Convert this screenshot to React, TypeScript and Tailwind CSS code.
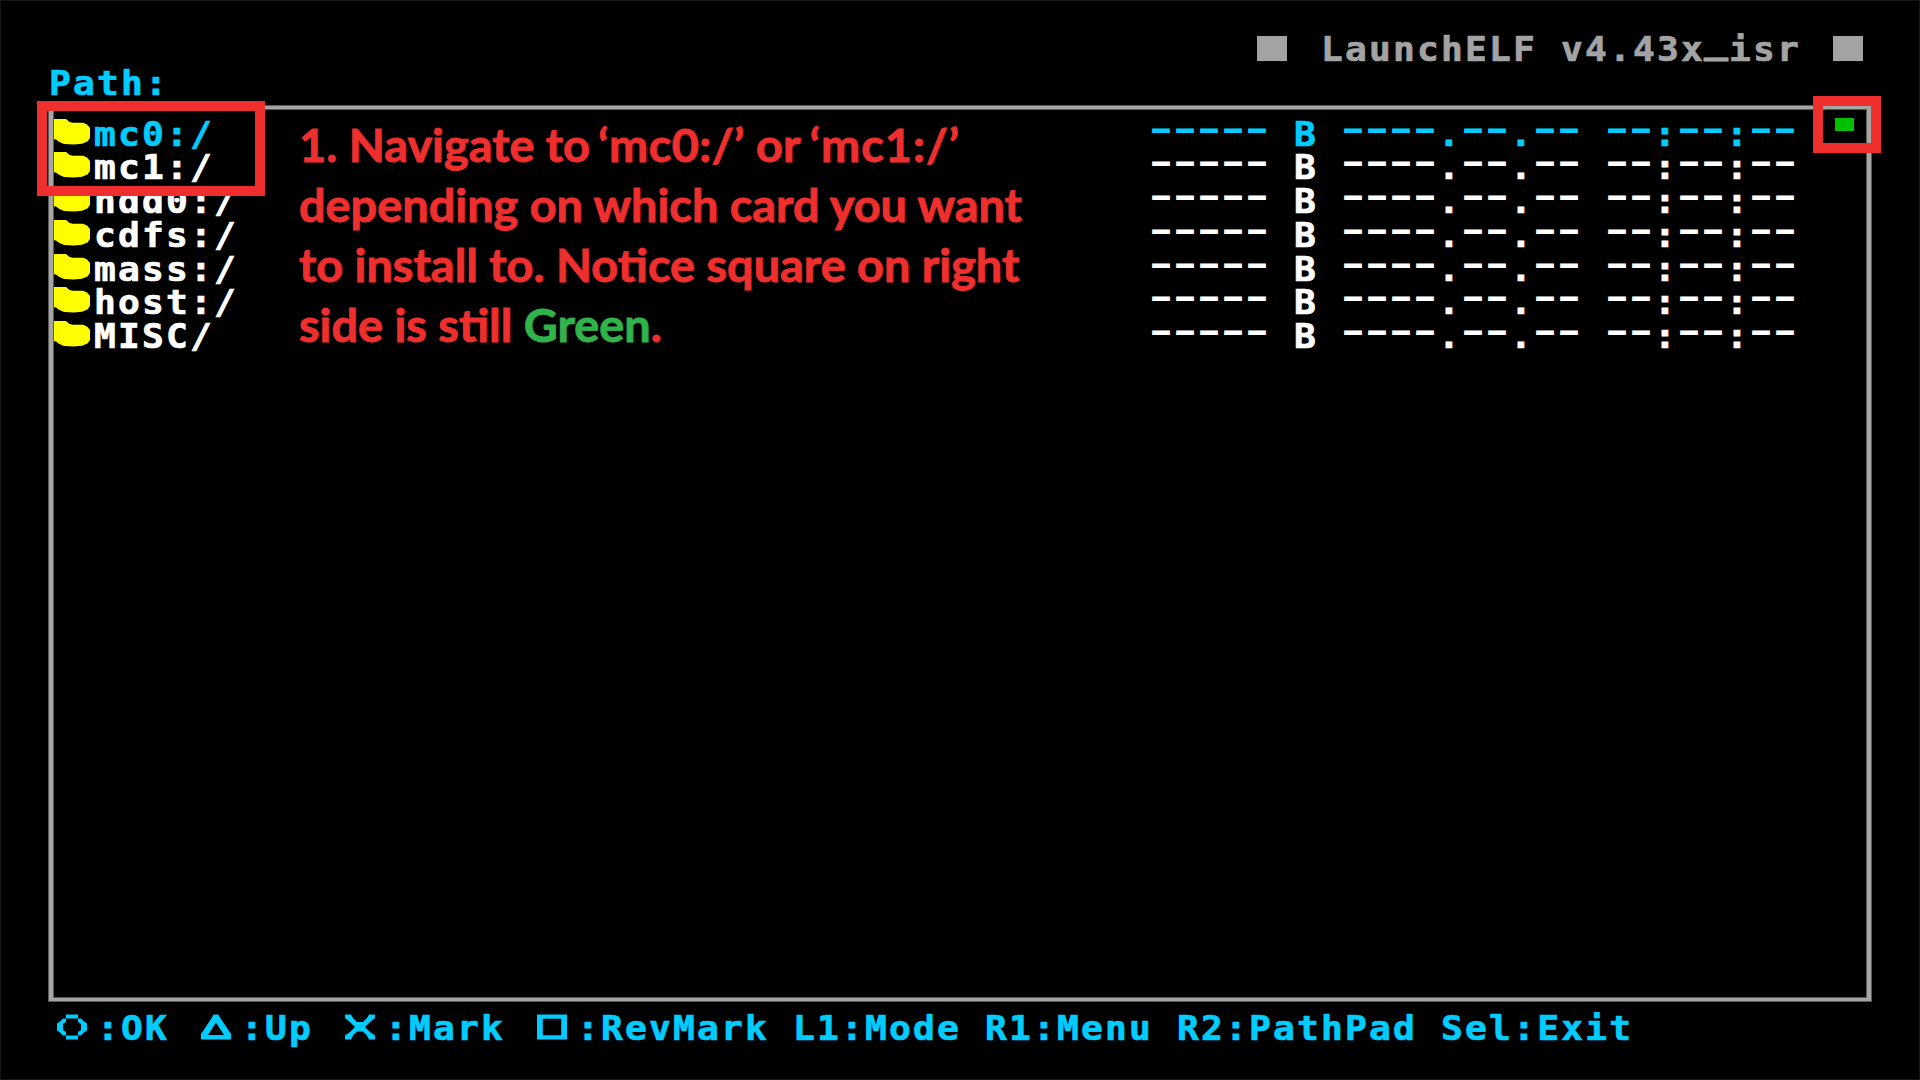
const CELL = 24;

const rows = ['mc0:/', 'mc1:/', 'hdd0:/', 'cdfs:/', 'mass:/', 'host:/', 'MISC/'];
const details = '----- B ----.--.-- --:--:--';

const pad = {
  circle:
    'M9 0.4H21V4.5H9ZM9 21.5H21V25.6H9ZM9 4.5V8L6 10V16L9 18V21.5H6L3 18.5L0 16.5V9.5L3 7.5L6 4.5ZM21 4.5V8L24 10V16L21 18V21.5H24L27 18.5L30 16.5V9.5L27 7.5L24 4.5Z',
  triangle: 'M12.7 0.4H17.3L20 5L30 20V25.6H0V20L10 5ZM15 8.5L7 21H23Z',
  cross:
    'M0 0.4H6L8 4L12 8H18L22 4L24 0.4H30V4L25 8L20 13L25 18L30 21.5V25.6H24L22 21.5L18 17.5H12L8 21.5L6 25.6H0V21.5L5 18L10 13L5 8L0 4Z',
  square: 'M0 0.4H30V25.6H0ZM5.8 4.8V21.2H24.2V4.8Z',
};

/** Console text on a 24px character grid. */
function Mono({ children }: { children: string }) {
  const chunks = children.match(/-+|_+|[^-_]+/g) ?? [];
  return (
    <span className="inline-flex h-[33.75px] whitespace-pre font-['DejaVu_Sans_Mono',monospace] text-[34.5px] font-bold leading-[33.75px]">
      {chunks.map((chunk, i) => (
        <span key={i} className="block" style={{ width: chunk.length * CELL }}>
          <span
            className={
              chunk[0] === '-'
                ? "block w-max origin-left -translate-y-[3.6px] scale-x-[1.676] scale-y-[0.9] font-['DejaVu_Sans',sans-serif]"
                : chunk[0] === '_'
                  ? 'block w-max origin-left -translate-y-[7.5px] scale-x-[1.155] [-webkit-text-stroke:0.8px_currentColor]'
                  : 'block w-max origin-left translate-x-[1.1px] translate-y-[0.7px] scale-x-[1.05] tracking-[2.087px] [-webkit-text-stroke:0.7px_currentColor]'
            }
          >
            {chunk}
          </span>
        </span>
      ))}
    </span>
  );
}

function Folder() {
  return (
    <svg className="mt-[1px] h-[27px] w-[36px]" viewBox="0 0 36 27" fill="#ffff00">
      <path d="M0 1H12L15.5 4L19 4.7H29L33 6.5L36 10V20L33.5 23.5L28 25.8L20 26.6L10 26L5 23.8L2 21.6L0 21.3Z" />
    </svg>
  );
}

function PadIcon({ shape }: { shape: keyof typeof pad }) {
  return (
    <span className="flex h-[33.75px] w-[48px] items-start justify-center pt-[3px]">
      <svg className="h-[26px] w-[30px]" viewBox="0 0 30 26" fill="#00ccff" fillRule="evenodd">
        <path d={pad[shape]} />
      </svg>
    </span>
  );
}

function Square() {
  return <span className="mt-[4px] h-[25px] w-[30px] bg-[#a3a3a3]" />;
}

export default function App() {
  return (
    <div className="relative flex h-[1080px] w-[1920px] flex-col overflow-hidden bg-black px-[48px] pt-[32.2px] shadow-[inset_0_0_0_1px_#161616]">
      <header>
        <div className="flex h-[33.75px] justify-end gap-[33px] pr-[9px] text-[#a3a3a3]">
          <Square />
          <Mono>LaunchELF v4.43x_isr</Mono>
          <Square />
        </div>
        <div className="flex h-[33.75px] text-[#00ccff]">
          <Mono>Path:</Mono>
        </div>
      </header>

      <main className="mx-[1px] mt-[6.3px] h-[895px] w-[1822px] border-x-[4px] border-y-[3px] border-[#a5a5a5] pl-[1px] pt-[7.7px] shadow-[0_0_0_1px_#5a5a5a,inset_0_0_0_1px_#5a5a5a]">
        {rows.map((name, i) => (
          <div
            key={name}
            className={`flex h-[33.75px] pr-[70px] ${i === 0 ? 'text-[#00ccff]' : 'text-white'}`}
          >
            <div className="w-[39px]">
              <Folder />
            </div>
            <div className="flex-1">
              <Mono>{name}</Mono>
            </div>
            <Mono>{details}</Mono>
          </div>
        ))}
      </main>

      <footer className="mt-[10.2px] flex text-[#00ccff]">
        <PadIcon shape="circle" />
        <Mono>:OK </Mono>
        <PadIcon shape="triangle" />
        <Mono>:Up </Mono>
        <PadIcon shape="cross" />
        <Mono>:Mark </Mono>
        <PadIcon shape="square" />
        <Mono>:RevMark L1:Mode R1:Menu R2:PathPad Sel:Exit</Mono>
      </footer>

      <div className="absolute left-[37px] top-[101px] h-[95px] w-[228px] border-[10px] border-[#ef2e2e]" />
      <div className="absolute left-[1813px] top-[96px] flex h-[57px] w-[68px] border-[10px] border-[#ef2e2e] pl-[12px] pt-[12px]">
        <span className="h-[13px] w-[19px] bg-[#00c000]" />
      </div>

      <p className="absolute left-[299px] top-[115px] origin-left scale-x-[1.041] whitespace-nowrap font-['Lato',sans-serif] text-[45px] font-bold leading-[60px] text-[#ef2e2e] [-webkit-text-stroke:0.9px_currentColor]">
        1. Navigate to <span className="-ml-[3px] tracking-[0.4px]">‘mc0:/’</span> or{' '}
        <span className="-ml-[1px] tracking-[0.9px]">‘mc1:/’</span>
        <br />
        depending on which card you want
        <br />
        to install to. Notice square on right
        <br />
        side is still <span className="text-[#2fb34a]">Green</span>.
      </p>
    </div>
  );
}
